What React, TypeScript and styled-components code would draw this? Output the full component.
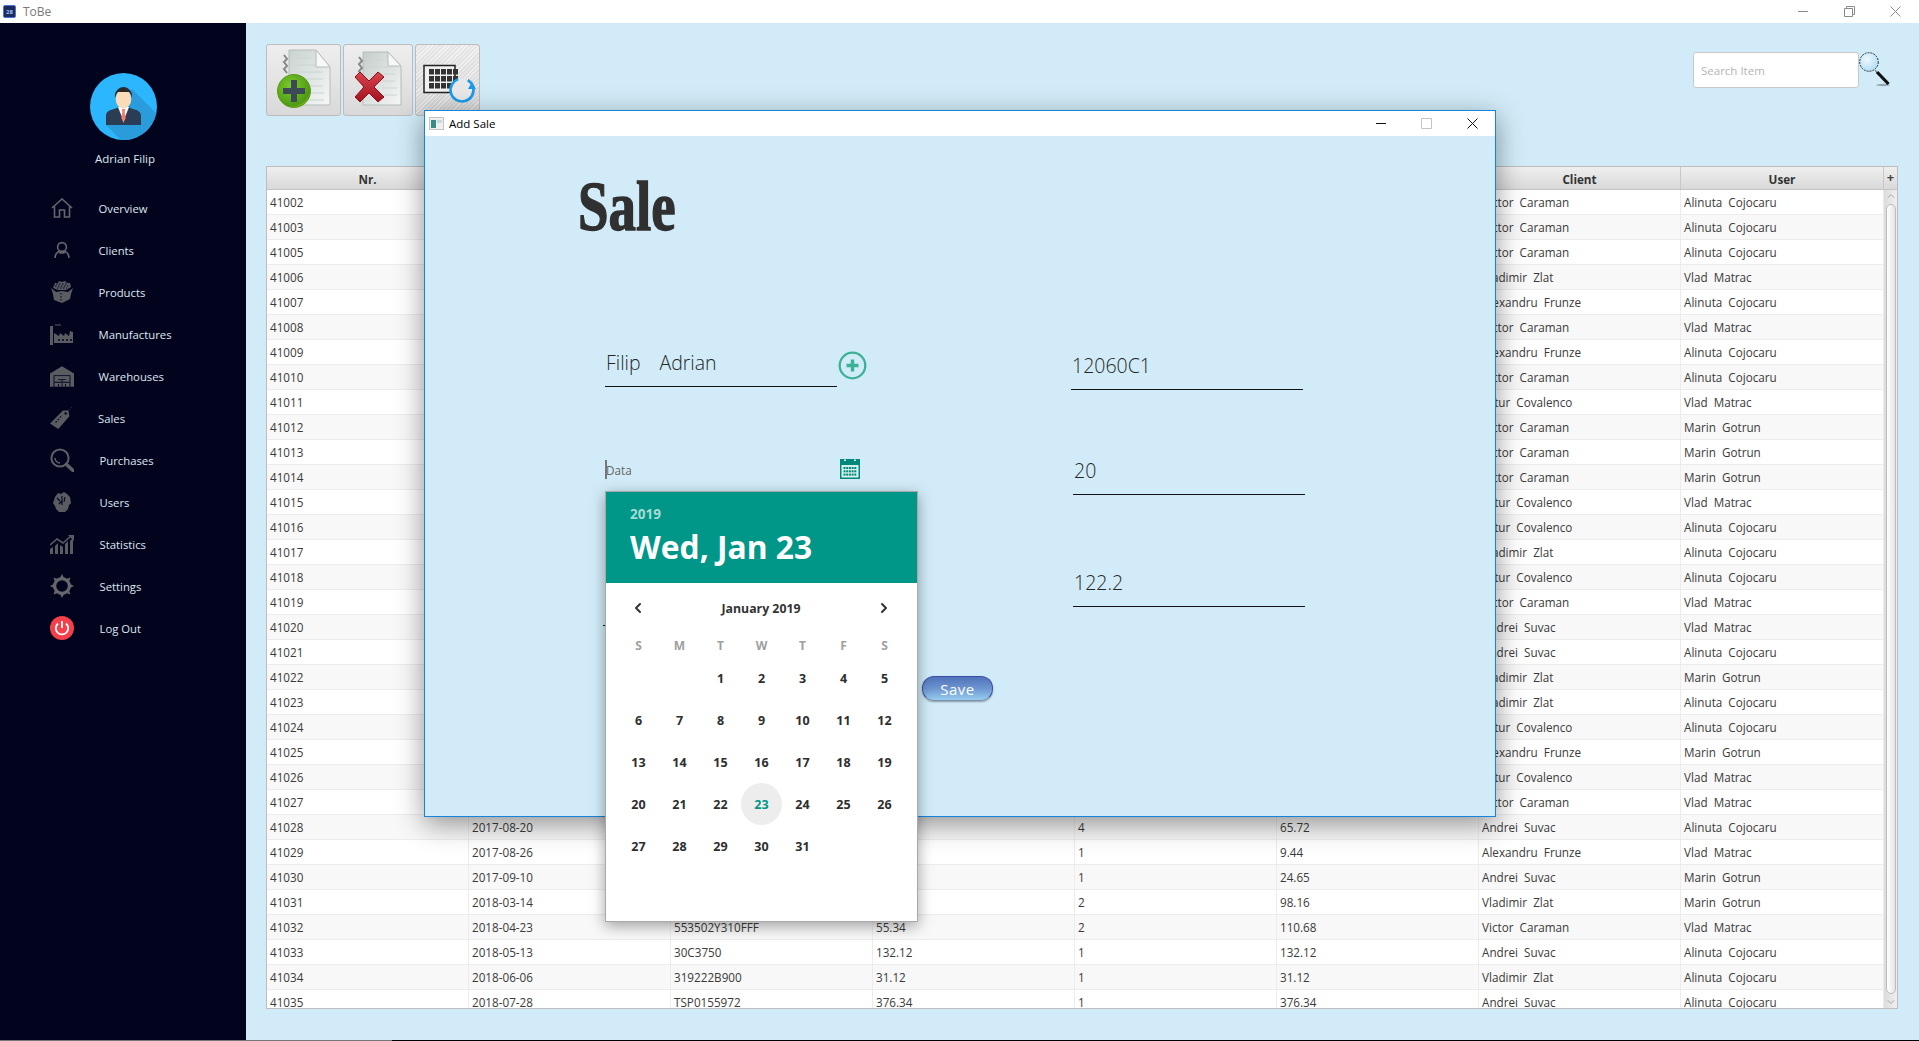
import React from "react";
import styled, { createGlobalStyle } from "styled-components";
import { ChevronLeft, ChevronRight, ChevronUp, ChevronDown } from "lucide-react";

const UI = `"Open Sans", "Noto Sans", sans-serif`;

const Global = createGlobalStyle`
  html, body { margin: 0; padding: 0; background: #d1ecf8; overflow: hidden; }
  * { box-sizing: border-box; }
`;

const Root = styled.div`
  position: relative;
  width: 1919px;
  height: 1041px;
  display: flex;
  flex-direction: column;
  overflow: hidden;
  font-family: ${UI};
`;

const TitleBar = styled.header`
  height: 23px;
  flex: none;
  background: #fff;
  display: flex;
  align-items: center;
  padding-left: 3px;
  color: #7a7a7a;
  font-size: 12px;
`;
const AppMark = styled.span`
  width: 13px;
  height: 13px;
  border-radius: 2px;
  background: #1d2b5a;
  border: 1px solid #4a74d8;
  margin-right: 7px;
  display: flex;
  align-items: center;
  justify-content: center;
  color: #9fc0ff;
  font-size: 6px;
  font-weight: 700;
`;
const WinControls = styled.div<{ $pr?: number }>`
  margin-left: auto;
  padding-right: ${(p) => p.$pr ?? 0}px;
  display: flex;
  align-items: center;
`;
const WinSlot = styled.span<{ $w: number }>`
  width: ${(p) => p.$w}px;
  display: flex;
  justify-content: center;
  align-items: center;
`;

const Body = styled.div`
  flex: 1;
  display: flex;
  min-height: 0;
`;
const BottomEdge = styled.div`
  height: 1px;
  flex: none;
  background: linear-gradient(90deg, #777 0, #777 392px, #000 392px);
`;

const Sidebar = styled.aside`
  width: 246px;
  flex: none;
  background: #02041e;
  padding-top: 50px;
  display: flex;
  flex-direction: column;
`;
const AvatarWrap = styled.div`
  margin-left: 90px;
  width: 67px;
  height: 67px;
`;
const UserName = styled.div`
  margin-left: 95px;
  margin-top: 10px;
  height: 18px;
  line-height: 18px;
  color: #dfe6ef;
  font-size: 11.5px;
`;
const Nav = styled.nav`
  margin-top: 19px;
  display: flex;
  flex-direction: column;
`;
const NavItem = styled.div`
  height: 42px;
  display: flex;
  align-items: center;
  padding-left: 50px;
  color: #dfe6ef;
  font-size: 11.3px;
`;
const NavIcon = styled.span<{ $gap: number }>`
  width: 24px;
  height: 26px;
  display: flex;
  align-items: center;
  justify-content: center;
  margin-right: ${(p) => p.$gap}px;
`;

const Main = styled.main`
  flex: 1;
  min-width: 0;
  background: #d1ecf8;
  padding: 21px 21px 0 20px;
  display: flex;
  flex-direction: column;
`;
const TopRow = styled.div`
  height: 72px;
  display: flex;
  justify-content: space-between;
`;
const Toolbar = styled.div`
  display: flex;
  gap: 2px;
`;
const ToolButton = styled.button<{ $w: number; $hatch?: boolean }>`
  width: ${(p) => p.$w}px;
  height: 72px;
  padding: 0;
  border: 1px solid #bcbcbc;
  border-radius: 3px;
  background: ${(p) =>
      p.$hatch
        ? "repeating-linear-gradient(135deg, rgba(255,255,255,.35) 0 1px, rgba(0,0,0,.03) 1px 3px), "
        : ""}
    linear-gradient(180deg, #eeeeee 0%, #d9d9d9 100%);
  display: flex;
  align-items: center;
  justify-content: center;
`;
const SearchGroup = styled.div`
  margin-top: 8px;
  padding-right: 7px;
  display: flex;
  align-items: flex-start;
`;
const SearchBox = styled.div`
  width: 166px;
  height: 36px;
  background: #fff;
  border: 1px solid #c6c9cc;
  border-radius: 3px;
  display: flex;
  align-items: center;
  padding-left: 7px;
  color: #b4b4b4;
  font-size: 11.5px;
`;

const Table = styled.section`
  margin-top: 50px;
  height: 843px;
  border: 1px solid #bdbdbd;
  background: #fff;
  display: flex;
  flex-direction: column;
`;
const HeaderRow = styled.div`
  height: 23px;
  flex: none;
  display: flex;
  border-bottom: 1px solid #c4c4c4;
  background: linear-gradient(180deg, #efefef 0%, #d9d9d9 100%);
`;
const COLS = "repeat(7, 202px) 203px";
const HeadGrid = styled.div`
  display: grid;
  grid-template-columns: ${COLS};
`;
const HeadCell = styled.div`
  padding-top: 2px;
  display: flex;
  align-items: center;
  justify-content: center;
  border-right: 1px solid #c8c8c8;
  color: #333;
  font-size: 11.7px;
  font-weight: 700;
`;
const Corner = styled.div`
  flex: 1;
  display: flex;
  justify-content: center;
  color: #444;
  font-size: 13px;
  font-weight: 700;
  line-height: 20px;
`;
const TableBody = styled.div`
  flex: 1;
  min-height: 0;
  display: flex;
`;
const Rows = styled.div`
  width: 1617px;
  flex: none;
  overflow: hidden;
`;
const Row = styled.div<{ $odd: boolean }>`
  height: 25px;
  display: grid;
  grid-template-columns: ${COLS};
  background: ${(p) => (p.$odd ? "#f8f8f8" : "#fff")};
  border-bottom: 1px solid #ececec;
`;
const Cell = styled.div`
  padding-left: 3px;
  line-height: 25px;
  border-right: 1px solid #ececec;
  color: #3a3a3a;
  font-size: 11.7px;
  white-space: pre;
  overflow: hidden;
`;
const Scrollbar = styled.div`
  flex: 1;
  background: linear-gradient(90deg, #dcdcdc, #efefef);
  display: flex;
  flex-direction: column;
  align-items: center;
  color: #a8a8a8;
`;
const Thumb = styled.div`
  width: 10px;
  flex: 1;
  margin: 2px 0;
  border: 1px solid #bbb;
  border-radius: 5px;
  background: linear-gradient(90deg, #fff, #e4e4e4);
`;

const Dialog = styled.div`
  position: absolute;
  left: 424px;
  top: 110px;
  width: 1072px;
  height: 707px;
  background: #d1ecf8;
  border: 1px solid #1484dc;
  box-shadow: 0 7px 26px rgba(0, 0, 0, 0.42);
  display: flex;
  flex-direction: column;
`;
const DialogBar = styled.div`
  height: 25px;
  flex: none;
  background: #fff;
  display: flex;
  align-items: center;
  padding: 0 0 1px 4px;
  color: #000;
  font-size: 11.5px;
`;
const DialogBody = styled.div`
  flex: 1;
  padding-left: 180px;
  display: flex;
  flex-direction: column;
`;
const SaleTitle = styled.h1`
  margin: 31px 0 0 -27px;
  height: 98px;
  color: #303030;
  font: 700 69px/80px "Liberation Serif", serif;
  -webkit-text-stroke: 1.4px #303030;
  transform: scaleX(0.795);
  transform-origin: left top;
`;
const Form = styled.div`
  margin-top: 75px;
  display: flex;
  align-items: flex-start;
`;
const LeftCol = styled.div`
  width: 317px;
  flex: none;
  display: flex;
  flex-direction: column;
`;
const RightCol = styled.div`
  margin-left: 78px;
  display: flex;
  flex-direction: column;
`;
const FieldRow = styled.div`
  display: flex;
  align-items: center;
`;
const Field = styled.div<{ $h: number; $mt?: number; $ml?: number }>`
  width: 232px;
  height: ${(p) => p.$h}px;
  margin-top: ${(p) => p.$mt ?? 0}px;
  margin-left: ${(p) => p.$ml ?? 0}px;
  padding: 0 0 10px 1px;
  border-bottom: 1px solid #111;
  display: flex;
  align-items: flex-end;
  color: #262626;
  font-size: 19.5px;
  font-weight: 300;
  line-height: 26px;
  word-spacing: 1.2px;
  white-space: pre;
`;
const DateRow = styled.div`
  margin-top: 72px;
  width: 255px;
  height: 20px;
  display: flex;
  align-items: center;
  justify-content: space-between;
`;
const DateLabel = styled.span`
  height: 19px;
  margin-left: 0;
  border-left: 2px solid #777;
  color: #666;
  font-size: 11.7px;
  line-height: 20px;
  text-indent: -1px;
`;
const SaveButton = styled.button`
  margin-top: 336px;
  width: 71px;
  height: 25px;
  flex: none;
  padding: 0;
  border: 1px solid #3c4fa3;
  border-bottom-color: #7b8fa8;
  border-radius: 12px;
  background: linear-gradient(180deg, #5173bb 0%, #6d95d0 50%, #97cdf0 100%);
  box-shadow: 0 1px 2px rgba(0, 0, 0, 0.35);
  color: #fff;
  font: 400 15px ${UI};
  letter-spacing: 0.5px;
`;

const Popup = styled.div`
  position: absolute;
  left: 180px;
  top: 380px;
  width: 313px;
  height: 431px;
  background: #fff;
  border: 1px solid #a8a8a8;
  box-shadow: 0 4px 14px rgba(0, 0, 0, 0.36);
  display: flex;
  flex-direction: column;
`;
const PopHead = styled.div`
  height: 91px;
  flex: none;
  background: #009688;
  padding: 12px 0 0 24px;
`;
const PopYear = styled.div`
  color: #a5dcd4;
  font-size: 13.5px;
  font-weight: 700;
  line-height: 20px;
`;
const PopDate = styled.div`
  margin-top: 3px;
  color: #fff;
  font-size: 31.8px;
  font-weight: 700;
  line-height: 40px;
  white-space: nowrap;
`;
const MonthRow = styled.div`
  height: 50px;
  flex: none;
  padding: 0 25px 0 24px;
  display: flex;
  align-items: center;
  justify-content: space-between;
  color: #333;
  font-size: 12.3px;
  font-weight: 700;
`;
const CalGrid = styled.div`
  padding-left: 12px;
  display: grid;
  grid-template-columns: repeat(7, 41px);
  grid-template-rows: 24px repeat(5, 42px);
`;
const Weekday = styled.div`
  display: flex;
  align-items: center;
  justify-content: center;
  color: #a0a0a0;
  font-size: 12px;
  font-weight: 700;
`;
const Day = styled.div<{ $sel?: boolean }>`
  display: flex;
  align-items: center;
  justify-content: center;
  border-radius: 50%;
  background: ${(p) => (p.$sel ? "#ededed" : "transparent")};
  color: ${(p) => (p.$sel ? "#009688" : "#2e2e2e")};
  font-size: 12.5px;
  font-weight: 700;
`;

const C = "#5b5b62";
const icons: React.ReactNode[] = [
  <svg width="22" height="20" viewBox="0 0 22 20" fill="none" stroke="#66666c" strokeWidth="1.6" key="h"><path d="M1 10 11 1l10 9M3.5 8.5V19h5v-7h5v7h5V8.5" /></svg>,
  <svg width="16" height="18" viewBox="0 0 16 18" fill="none" stroke="#66666c" strokeWidth="1.6" key="u"><circle cx="8" cy="6" r="4.4" /><path d="M1 17c0-4 3-6.500 4-6.500M15 17c0-4-3-6.500-4-6.500M5 11c2 1.400 4 1.400 6 0" /></svg>,
  <svg width="24" height="22" viewBox="0 0 24 22" key="b"><path fill={C} d="M1 7 6 11l6-1 6 1 5-4-2 6-1 5-8 4-8-3-1-6z" /><path fill={C} d="M5 2h3l1-2 3 1 3-1 2 2 3 0 1 4-5 3H8L3 7z" /><path stroke="#02041e" strokeWidth="1" strokeDasharray="1.500 1.500" fill="none" d="M6 3h12M5 5h14M7 7h10M11 12v9" /></svg>,
  <svg width="24" height="24" viewBox="0 0 24 24" key="f"><path fill={C} d="M0 4h3v19H0zM4 11l5 3 1-3 4 3 1-3 4 3 1-5 3 1v11H4z" /><path stroke="#02041e" strokeWidth="1.500" strokeDasharray="2 2" d="M8 18h14" /><path stroke={C} strokeWidth="1" d="M5 3h6" /></svg>,
  <svg width="27" height="23" viewBox="0 0 27 23" key="w"><path fill={C} d="M0 8 13.500 0 27 8v15h-4V10H4v13H0z" /><path fill={C} d="M5 11h17v12H5z" /><path fill="#02041e" d="M9 14.500h9v1H9zM5 17.500h17v1H5zM13 15h1v3h-1zM9 20h1v3H9zM17 20h1v3h-1zM13 19h1v4h-1z" /></svg>,
  <svg width="26" height="26" viewBox="0 0 26 26" key="t"><path fill={C} d="M14 5h6l1 6-12 14-9-6z" /><circle cx="17" cy="8" r="1.300" fill="#02041e" /><path stroke="#02041e" strokeWidth="1.200" strokeDasharray="2 1.500" d="M6 18l7-8" /><path stroke={C} strokeWidth="1" strokeDasharray="1 2" d="M18 6l7-6" /></svg>,
  <svg width="24" height="24" viewBox="0 0 24 24" fill="none" stroke="#5f5f66" key="s"><circle cx="10" cy="10" r="8.600" strokeWidth="2" /><path d="M5 10a5 5 0 0 0 5 5" strokeWidth="1.500" /><path d="M16.500 16.500 23 22.500" strokeWidth="3.500" strokeLinecap="round" /></svg>,
  <svg width="24" height="24" viewBox="0 0 24 24" key="g"><path fill={C} d="M5 7 8 3l3 1 3-2 3 2 3 3 1 6-2 2-1 4-3 3H9l-3-3-1-3-2-3z" /><path stroke="#02041e" strokeWidth="1.100" fill="none" d="M12 6v5l-3 3M15 7l-1 5M7 8l3 3M12 11v4" /></svg>,
  <svg width="24" height="19" viewBox="0 0 24 19" key="c"><path fill={C} d="M0 14l3-2v7H0zM5 11l3-3v11H5zM10 10l3 2v7h-3zM15 9l3-3v13h-3zM20 6l3-3v16h-3z" /><path stroke={C} strokeWidth="1.600" fill="none" d="M0 10l7-6 6 4 8-7" /><path fill={C} d="M18 0h6v6z" /></svg>,
  <svg width="24" height="24" viewBox="0 0 24 24" key="x"><g fill="#66666c">{[0, 45, 90, 135, 180, 225, 270, 315].map((a) => <path key={a} d="M10 4 12 0l2 4z" transform={`rotate(${a} 12 12)`} />)}</g><circle cx="12" cy="12" r="7.400" fill="none" stroke="#66666c" strokeWidth="3.200" /></svg>,
  <svg width="24" height="24" viewBox="0 0 24 24" key="p"><circle cx="12" cy="12" r="12" fill="#f4404a" /><path d="M8 7.500a6.200 6.200 0 1 0 8 0" fill="none" stroke="#fff" strokeWidth="1.800" /><path d="M12 5v7" stroke="#fff" strokeWidth="1.800" /></svg>,
];
const labels = ["Overview", "Clients", "Products", "Manufactures", "Warehouses", "Sales", "Purchases", "Users", "Statistics", "Settings", "Log Out"];

const VC = "Victor  Caraman", VZ = "Vladimir  Zlat", AF = "Alexandru  Frunze", AC = "Artur  Covalenco", AS = "Andrei  Suvac";
const AL = "Alinuta  Cojocaru", VM = "Vlad  Matrac", MG = "Marin  Gotrun";
const ids = [41002, 41003, 41005, ...Array.from({ length: 30 }, (_, i) => 41006 + i)];
const clients = [VC, VC, VC, VZ, AF, VC, AF, VC, AC, VC, VC, VC, AC, AC, VZ, AC, VC, AS, AS, VZ, VZ, AC, AF, AC, VC, AS, AF, AS, VZ, VC, AS, VZ, AS];
const users = [AL, AL, AL, VM, AL, VM, AL, AL, VM, MG, MG, MG, VM, AL, AL, AL, VM, VM, AL, MG, AL, AL, MG, VM, VM, AL, VM, MG, MG, VM, AL, AL, AL];
const tail: Record<number, string[]> = {
  41028: ["2017-08-20", "", "", "4", "65.72"],
  41029: ["2017-08-26", "", "", "1", "9.44"],
  41030: ["2017-09-10", "", "", "1", "24.65"],
  41031: ["2018-03-14", "", "", "2", "98.16"],
  41032: ["2018-04-23", "553502Y310FFF", "55.34", "2", "110.68"],
  41033: ["2018-05-13", "30C3750", "132.12", "1", "132.12"],
  41034: ["2018-06-06", "319222B900", "31.12", "1", "31.12"],
  41035: ["2018-07-28", "TSP0155972", "376.34", "1", "376.34"],
};

const weekdays = ["S", "M", "T", "W", "T", "F", "S"];
const cells: (number | null)[] = [null, null, ...Array.from({ length: 31 }, (_, i) => i + 1)];
const headers = ["Nr.", "", "", "", "", "", "Client", "User"];

const Avatar = () => (
  <svg width="67" height="67" viewBox="0 0 67 67">
    <defs><clipPath id="av"><circle cx="33.500" cy="33.500" r="33.500" /></clipPath></defs>
    <circle cx="33.500" cy="33.500" r="33.500" fill="#2bb6fe" />
    <path clipPath="url(#av)" fill="#2a9bdb" d="M42 16 70 44V70H34L16 52z" />
    <path fill="#2b3d55" d="M16 52V43c0-4 3-6 8-7l5-2h9l5 2c5 1 8 3 8 7v9z" />
    <path fill="#fff" d="M28 34h11l-3.500 9h-4z" />
    <path fill="#f3806f" d="M31.800 36h3.400l-.5 3 1 6-2.200 5-2.200-5 1-6z" />
    <ellipse cx="33.500" cy="26" rx="7.800" ry="9.500" fill="#fbdcb8" />
    <path fill="#2a2a2c" d="M25 25c-1-7 4-11 8.500-11s9.500 4 8.500 11c-1-4-2-5-3-6h-11c-1 1-2 2-3 6z" />
  </svg>
);

const AddDoc = () => (
  <svg width="73" height="70" viewBox="0 0 73 70">
    <defs>
      <linearGradient id="doc" x1="0" y1="0" x2="1" y2="1"><stop offset="0" stopColor="#c9d3cf" /><stop offset="1" stopColor="#f5f7f6" /></linearGradient>
      <radialGradient id="grn" cx=".4" cy=".35" r=".75"><stop offset="0" stopColor="#7ccb2e" /><stop offset=".8" stopColor="#4e9a14" /><stop offset="1" stopColor="#a6e020" /></radialGradient>
    </defs>
    <path d="M22 5h27l14 17v38H22z" fill="url(#doc)" stroke="#b5bcb9" />
    <path d="M49 5v17h14z" fill="#f7f8f8" stroke="#b5bcb9" />
    <path d="M30 13h14M30 20h20M30 27h26M30 34h26M30 41h26M40 48h17M40 55h17" stroke="#c9d4d0" />
    <path d="M17 10l3 4-3 3 3 4-3 3 3 4" fill="none" stroke="#888" strokeWidth="2" />
    <circle cx="27" cy="46" r="16.500" fill="url(#grn)" stroke="#5f9a1c" />
    <path d="M24 35h6v8h8v6h-8v8h-6v-8h-8v-6h8z" fill="#3b4a55" />
  </svg>
);
const DelDoc = () => (
  <svg width="68" height="70" viewBox="0 0 68 70">
    <defs>
      <linearGradient id="doc2" x1="0" y1="0" x2="1" y2="1"><stop offset="0" stopColor="#c5cecb" /><stop offset="1" stopColor="#f4f6f5" /></linearGradient>
      <linearGradient id="red" x1="0" y1="0" x2="0" y2="1"><stop offset="0" stopColor="#d9444e" /><stop offset="1" stopColor="#a4121e" /></linearGradient>
    </defs>
    <path d="M19 7h25l13 14v39H19z" fill="url(#doc2)" stroke="#b5bcb9" />
    <path d="M44 7v14h13z" fill="#f7f8f8" stroke="#b5bcb9" />
    <path d="M27 15h12M27 22h22M27 29h24M27 36h24M38 43h15M38 50h15" stroke="#ccd5d2" />
    <path d="M15 12l3 4-3 3 3 4-3 3 3 4" fill="none" stroke="#888" strokeWidth="2" />
    <path d="M11 32l5-5 9 9 9-9 6 5-10 10 10 10-6 5-9-9-9 9-5-5 9-10z" fill="url(#red)" stroke="#8e1019" strokeLinejoin="round" />
  </svg>
);
const GridRefresh = () => (
  <svg width="63" height="70" viewBox="0 0 63 70">
    <path d="M8 20.500h31v27H8z" fill="#f0f0f0" stroke="#222" strokeWidth="1.500" />
    {[0, 1, 2].map((r) => [0, 1, 2, 3, 4].map((c) => (
      <rect key={`${r}${c}`} x={13 + c * 6} y={24 + r * 7} width="5" height="5.500" fill="#333" />
    )))}
    <circle cx="46" cy="45" r="11.500" fill="#e8e8e8" stroke="#1a9be8" strokeWidth="2.600" strokeDasharray="62 10" transform="rotate(-60 46 45)" />
    <path d="M52 44h8l-4 -7z" fill="#1a9be8" />
  </svg>
);

const Magnifier = () => (
  <svg width="32" height="36" viewBox="0 0 32 36">
    <defs><radialGradient id="gl" cx=".4" cy=".35" r=".8"><stop offset="0" stopColor="#eef8fe" /><stop offset="1" stopColor="#a6d8f3" /></radialGradient></defs>
    <ellipse cx="24" cy="33" rx="7" ry="1.200" fill="#98a8ae" />
    <path d="M16 18 19 22" stroke="#777" strokeWidth="1.200" />
    <circle cx="10" cy="10" r="9.300" fill="url(#gl)" stroke="#333" strokeDasharray="2 1" />
    <path d="M18 20 29.500 32" stroke="#111" strokeWidth="3.200" />
  </svg>
);

const Minus = ({ c }: { c: string }) => <svg width="11" height="11"><path d="M0 5.500h10" stroke={c} /></svg>;
const Close = ({ c }: { c: string }) => <svg width="11" height="11"><path d="M.5.500l10 10M10.500.500l-10 10" stroke={c} /></svg>;
const Restore = ({ c }: { c: string }) => <svg width="11" height="11" fill="none"><path d="M.5 2.500h8v8h-8zM2.500 2.500v-2h8v8h-2" stroke={c} /></svg>;
const Square = ({ c }: { c: string }) => <svg width="11" height="11"><path d="M.5.500h10v10h-10z" fill="none" stroke={c} /></svg>;

const DialogIcon = () => (
  <svg width="15" height="13" viewBox="0 0 15 13" style={{ marginRight: 5 }}>
    <rect x=".5" y=".5" width="14" height="12" fill="#eef0ee" stroke="#c4c4c4" />
    <rect x="2" y="3" width="5" height="8" fill="#3b8a86" />
    <rect x="8" y="3" width="5" height="3" fill="#c8d8e0" />
  </svg>
);
const PlusCircle = () => (
  <svg width="29" height="29" viewBox="0 0 29 29" style={{ marginLeft: 1, marginTop: 4 }}>
    <circle cx="14.500" cy="14.500" r="12.800" fill="none" stroke="#3cb195" strokeWidth="2.300" />
    <path d="M12.800 8.500h3.400v4.300h4.300v3.400h-4.300v4.300h-3.400v-4.300H8.500v-3.400h4.300z" fill="#3cb195" />
  </svg>
);
const CalIcon = () => (
  <svg width="20" height="20" viewBox="0 0 20 20">
    <rect width="20" height="20" fill="#00897b" />
    <rect x="1.500" y="6" width="17" height="12.500" fill="#d6f0ee" />
    <path d="M4 1.200h2M14 1.200h2" stroke="#d1ecf8" strokeWidth="1.500" />
    {[0, 1, 2].map((r) => [0, 1, 2, 3, 4].map((c) => (
      <rect key={`${r}${c}`} x={3.500 + c * 2.700} y={8 + r * 3.300} width="2" height="2" fill="#00897b" />
    )))}
  </svg>
);

export default function App() {
  return (
    <Root>
      <Global />
      <TitleBar>
        <AppMark>28</AppMark>ToBe
        <WinControls $pr={1}>
          <WinSlot $w={45}><Minus c="#8a8a8a" /></WinSlot>
          <WinSlot $w={46}><Restore c="#8a8a8a" /></WinSlot>
          <WinSlot $w={46}><Close c="#8a8a8a" /></WinSlot>
        </WinControls>
      </TitleBar>
      <Body>
        <Sidebar>
          <AvatarWrap><Avatar /></AvatarWrap>
          <UserName>Adrian Filip</UserName>
          <Nav>
            {labels.map((l, i) => (
              <NavItem key={l}>
                <NavIcon $gap={i >= 6 ? 25.5 : i === 5 ? 24 : 24.5}>{icons[i]}</NavIcon>
                {l}
              </NavItem>
            ))}
          </Nav>
        </Sidebar>
        <Main>
          <TopRow>
            <Toolbar>
              <ToolButton $w={75}><AddDoc /></ToolButton>
              <ToolButton $w={70}><DelDoc /></ToolButton>
              <ToolButton $w={65} $hatch><GridRefresh /></ToolButton>
            </Toolbar>
            <SearchGroup>
              <SearchBox>Search Item</SearchBox>
              <Magnifier />
            </SearchGroup>
          </TopRow>
          <Table>
            <HeaderRow>
              <HeadGrid>
                {headers.map((h, i) => (
                  <HeadCell key={i}>{h}</HeadCell>
                ))}
              </HeadGrid>
              <Corner>+</Corner>
            </HeaderRow>
            <TableBody>
              <Rows>
                {ids.map((id, i) => {
                  const t = tail[id] ?? ["", "", "", "", ""];
                  return (
                    <Row key={id} $odd={i % 2 === 1}>
                      <Cell>{id}</Cell>
                      {t.map((v, j) => <Cell key={j}>{v}</Cell>)}
                      <Cell>{clients[i]}</Cell>
                      <Cell>{users[i]}</Cell>
                    </Row>
                  );
                })}
              </Rows>
              <Scrollbar>
                <ChevronUp size={12} />
                <Thumb />
                <ChevronDown size={12} />
              </Scrollbar>
            </TableBody>
          </Table>
        </Main>
      </Body>
      <BottomEdge />
      <Dialog>
        <DialogBar>
          <DialogIcon />Add Sale
          <WinControls>
            <WinSlot $w={43}><Minus c="#111" /></WinSlot>
            <WinSlot $w={46}><Square c="#c4c4c4" /></WinSlot>
            <WinSlot $w={46}><Close c="#111" /></WinSlot>
          </WinControls>
        </DialogBar>
        <DialogBody>
          <SaleTitle>Sale</SaleTitle>
          <Form>
            <LeftCol>
              <FieldRow>
                <Field $h={47}>{"Filip   Adrian"}</Field>
                <PlusCircle />
              </FieldRow>
              <DateRow>
                <DateLabel>Data</DateLabel>
                <CalIcon />
              </DateRow>
              <Field $h={47} $mt={100} $ml={-2} />
            </LeftCol>
            <SaveButton>Save</SaveButton>
            <RightCol>
              <Field $h={50}>12060C1</Field>
              <Field $h={50} $mt={55} $ml={2}>20</Field>
              <Field $h={50} $mt={62} $ml={2}>122.2</Field>
            </RightCol>
          </Form>
          <Popup>
            <PopHead>
              <PopYear>2019</PopYear>
              <PopDate>Wed, Jan 23</PopDate>
            </PopHead>
            <MonthRow>
              <ChevronLeft size={16} strokeWidth={3} />
              January 2019
              <ChevronRight size={16} strokeWidth={3} />
            </MonthRow>
            <CalGrid>
              {weekdays.map((d, i) => <Weekday key={i}>{d}</Weekday>)}
              {cells.map((d, i) => <Day key={i} $sel={d === 23}>{d}</Day>)}
            </CalGrid>
          </Popup>
        </DialogBody>
      </Dialog>
    </Root>
  );
}
